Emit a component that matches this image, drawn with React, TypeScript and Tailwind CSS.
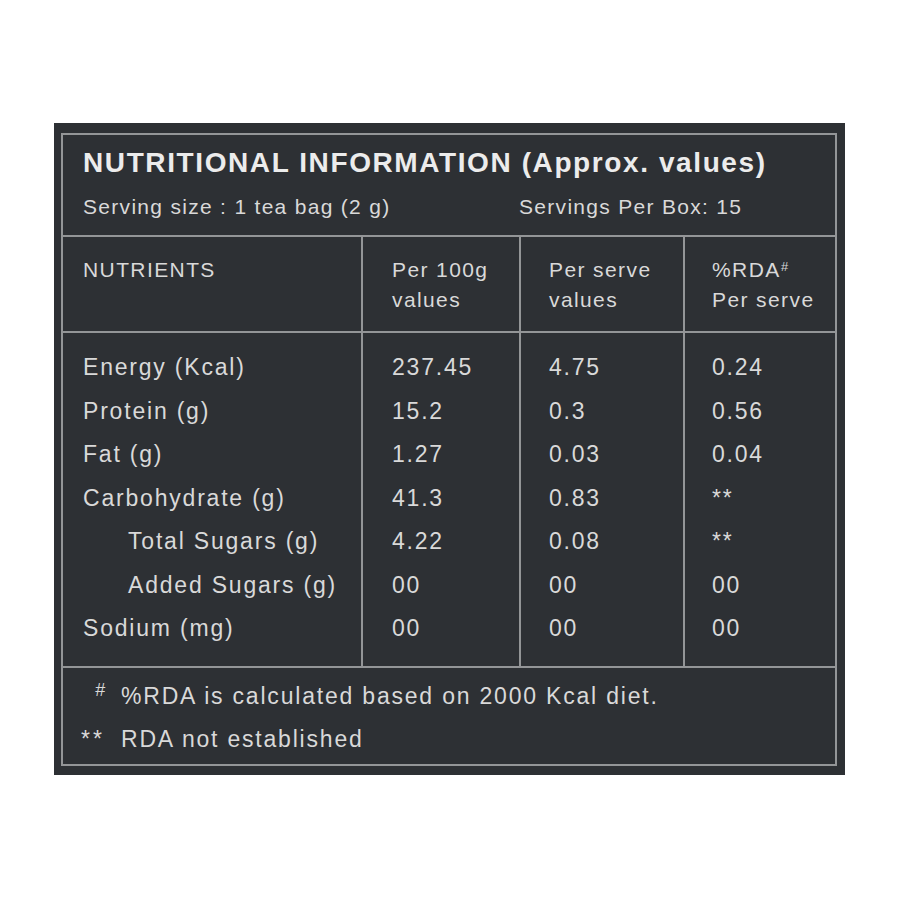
const rows = [
  { name: 'Energy (Kcal)', per100: '237.45', serve: '4.75', rda: '0.24' },
  { name: 'Protein (g)', per100: '15.2', serve: '0.3', rda: '0.56' },
  { name: 'Fat (g)', per100: '1.27', serve: '0.03', rda: '0.04' },
  { name: 'Carbohydrate (g)', per100: '41.3', serve: '0.83', rda: '**' },
  { name: 'Total Sugars (g)', per100: '4.22', serve: '0.08', rda: '**', sub: true },
  { name: 'Added Sugars (g)', per100: '00', serve: '00', rda: '00', sub: true },
  { name: 'Sodium (mg)', per100: '00', serve: '00', rda: '00' },
];

function App() {
  return (
    <div className="min-h-[900px] bg-white pt-[123px] pl-[54px] font-['Liberation_Sans',Arial,sans-serif]">
      <div className="w-[791px] bg-[#2d3034] pt-[10px] pl-[7px] pr-[8px] pb-[9px]">
        <div className="border-2 border-[#939597] text-[#d9d9d9]">

          {/* title */}
          <div className="border-b-2 border-[#939597] pt-[12px] pb-[16px]">
            <h1 className="pl-[20px] text-[28px] leading-[32px] font-bold tracking-[1.6px] text-[#ececec]">
              NUTRITIONAL INFORMATION (Approx. values)
            </h1>
            <div className="mt-[16px] flex text-[21px] leading-[24px] tracking-[1.3px]">
              <div className="w-[456px] pl-[20px]">Serving size : 1 tea bag (2 g)</div>
              <div>Servings Per Box: 15</div>
            </div>
          </div>

          {/* column headings */}
          <div className="grid grid-cols-[300px_158px_164px_150px] border-b-2 border-[#939597] text-[21px] leading-[30px] tracking-[1.4px]">
            <div className="border-r-2 border-[#939597] pl-[20px] pt-[18px] pb-[16px]">NUTRIENTS</div>
            <div className="border-r-2 border-[#939597] pl-[29px] pt-[18px] pb-[16px]">
              Per 100g<br />values
            </div>
            <div className="border-r-2 border-[#939597] pl-[28px] pt-[18px] pb-[16px]">
              Per serve<br />values
            </div>
            <div className="pl-[27px] pt-[18px] pb-[16px]">
              %RDA<sup className="text-[13px] italic">#</sup><br />Per serve
            </div>
          </div>

          {/* values */}
          <div className="grid grid-cols-[300px_158px_164px_150px] border-b-2 border-[#939597] text-[23px] leading-[43.5px] tracking-[1.8px]">
            <div className="border-r-2 border-[#939597] pl-[20px] pt-[13px] pb-[15.5px]">
              {rows.map((r) => (
                <div key={r.name} className={r.sub ? 'pl-[45px]' : ''}>{r.name}</div>
              ))}
            </div>
            <div className="border-r-2 border-[#939597] pl-[29px] pt-[13px] pb-[15.5px]">
              {rows.map((r) => (
                <div key={r.name}>{r.per100}</div>
              ))}
            </div>
            <div className="border-r-2 border-[#939597] pl-[28px] pt-[13px] pb-[15.5px]">
              {rows.map((r) => (
                <div key={r.name}>{r.serve}</div>
              ))}
            </div>
            <div className="pl-[27px] pt-[13px] pb-[15.5px]">
              {rows.map((r) => (
                <div key={r.name}>{r.rda}</div>
              ))}
            </div>
          </div>

          {/* footnotes */}
          <div className="pt-[7px] pb-[3px] text-[23px] leading-[43px] tracking-[1.8px]">
            <div className="flex">
              <span className="w-[42px] text-right">
                <span className="relative -top-[8px] text-[18px] leading-none italic tracking-normal">#</span>
              </span>
              <span className="ml-[16px]">%RDA is calculated based on 2000 Kcal diet.</span>
            </div>
            <div className="flex">
              <span className="w-[42px] text-right tracking-[3px]">**</span>
              <span className="ml-[16px]">RDA not established</span>
            </div>
          </div>
        </div>
      </div>
    </div>
  );
}

export default App;
